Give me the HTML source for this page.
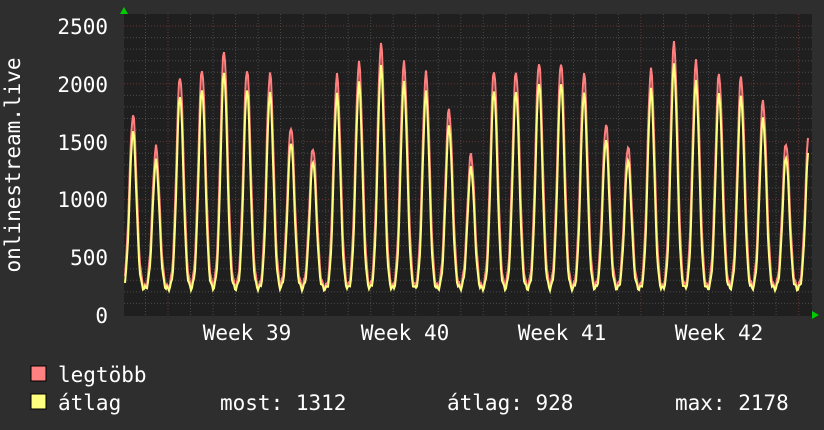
<!DOCTYPE html>
<html><head><meta charset="utf-8"><style>
body{margin:0;background:#2e2e2e;width:824px;height:430px;overflow:hidden}
svg{display:block}
text{font-family:"DejaVu Sans Mono","Liberation Mono",monospace;fill:#fff;font-size:21px}
</style></head><body>
<svg id="s" width="824" height="430" xmlns="http://www.w3.org/2000/svg">
<rect x="124" y="14" width="688" height="302" fill="#1f1f1f"/>
<g id="grid"></g>
<polyline id="mx" fill="none" stroke="#ff7f7f" stroke-width="2"/>
<polyline id="av" fill="none" stroke="#ffff80" stroke-width="2"/>
<polygon points="120,14 128,14 124,7" fill="#00cc00"/>
<polygon points="812,311 812,319 819,315" fill="#00cc00"/>
<g text-anchor="end">
<text x="108" y="34">2500</text>
<text x="108" y="92">2000</text>
<text x="108" y="150">1500</text>
<text x="108" y="207">1000</text>
<text x="108" y="265">500</text>
<text x="108" y="323">0</text>
</g>
<text transform="translate(20,165) rotate(-90)" text-anchor="middle">onlinestream.live</text>
<g text-anchor="middle">
<text x="247" y="340">Week 39</text>
<text x="405" y="340">Week 40</text>
<text x="562" y="340">Week 41</text>
<text x="719" y="340">Week 42</text>
</g>
<rect x="31" y="366" width="15" height="15" fill="#ff8080" stroke="#000"/>
<rect x="31" y="394" width="15" height="15" fill="#ffff80" stroke="#000"/>
<text x="58" y="382">legtöbb</text>
<text x="58" y="410">átlag</text>
<text x="220" y="410">most: 1312</text>
<text x="447" y="410">átlag: 928</text>
<text x="675" y="410">max: 2178</text>
</svg>
<script>
var g=document.getElementById('grid'),h='';
function Y(v){return 315-v*0.1156;}
for(var v=100;v<=2500;v+=100){var y=Y(v).toFixed(1);var maj=v%500==0;
h+='<line x1="124" x2="812" y1="'+y+'" y2="'+y+'" stroke="'+(maj?'#6a3434':'#4a4a4a')+'" stroke-dasharray="1,2"/>';}
for(var x=145.5;x<812;x+=22.52){var maj=Math.abs(((x-168)/157.6)-Math.round((x-168)/157.6))<0.02;
h+='<line y1="14" y2="316" x1="'+x.toFixed(1)+'" x2="'+x.toFixed(1)+'" stroke="'+(maj?'#6a3434':'#4a4a4a')+'" stroke-dasharray="1,2"/>';}
g.innerHTML=h;
var P=[[133,1730],[156,1450],[180,2070],[202,2130],[224,2290],[247,2130],[270,2090],[291,1630],[313,1450],[337,2070],[359,2180],[381,2340],[404,2180],[426,2090],[449,1780],[471,1390],[494,2120],[516,2110],[539,2190],[561,2190],[584,2090],[606,1650],[628,1460],[651,2120],[674,2350],[696,2190],[719,2090],[741,2060],[763,1850],[786,1490],[809,1600]];
var a=[],b=[];
for(var x=125;x<=808;x+=1){var m=230,s=225;
for(var i=0;i<P.length;i++){var d=(x-P[i][0])/3.6;var e=Math.exp(-d*d*0.5);m=Math.max(m,230+(P[i][1]-230)*e);s=Math.max(s,225+(P[i][1]*0.92-225)*Math.exp(-d*d*0.6));}
var n=Math.sin(x*1.7)*25;
a.push(x.toFixed(1)+','+Y(m+n).toFixed(1));b.push(x.toFixed(1)+','+Y(s+n*0.8).toFixed(1));}
document.getElementById('mx').setAttribute('points',a.join(' '));
document.getElementById('av').setAttribute('points',b.join(' '));
</script>
</body></html>
